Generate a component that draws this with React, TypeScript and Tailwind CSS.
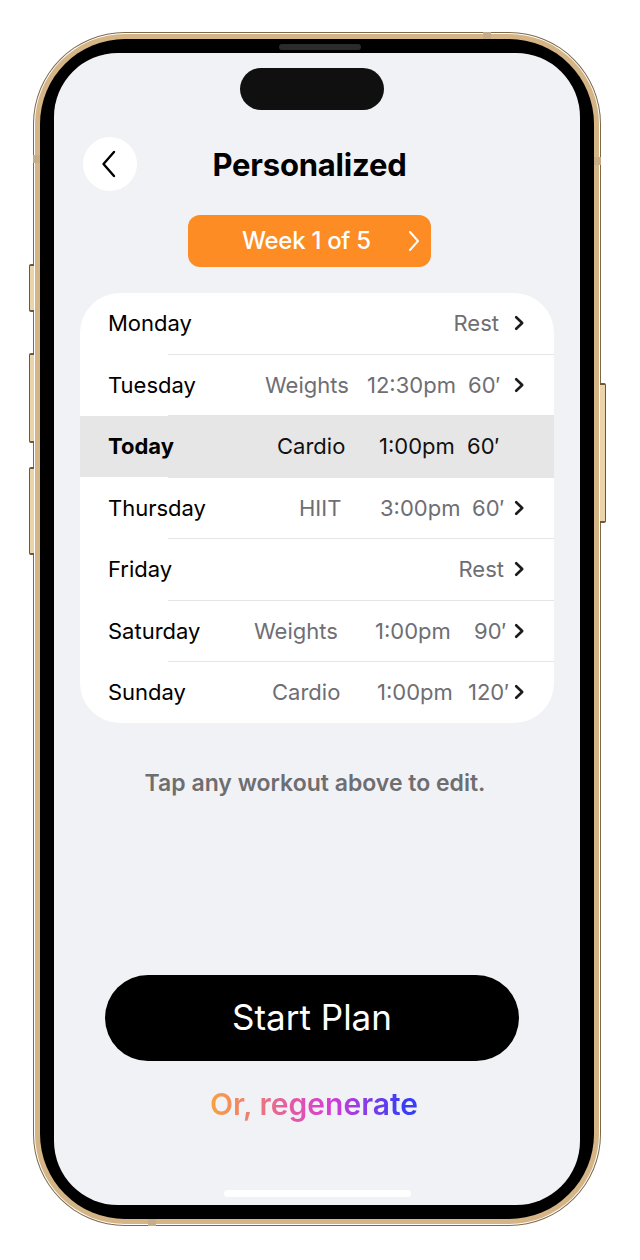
import React from 'react';

type Cell = { text: string; w: string; ml: string; align?: 'left' | 'right' };

interface Row {
  day: string;
  today?: boolean;
  cells: Cell[];
  chevronMl: string;
  chevron: boolean;
}

// widths / gaps read off the reference, so the columns sit where they do there
const ROWS: Row[] = [
  { day: 'Monday', cells: [{ text: 'Rest', w: 'w-[46px]', ml: 'ml-0', align: 'right' }], chevronMl: 'ml-[14px]', chevron: true },
  {
    day: 'Tuesday',
    cells: [
      { text: 'Weights', w: 'w-[85px]', ml: 'ml-0' },
      { text: '12:30pm', w: 'w-[93px]', ml: 'ml-[17px]' },
      { text: '60′', w: 'w-[34px]', ml: 'ml-[8px]' },
    ],
    chevronMl: 'ml-[11px]',
    chevron: true,
  },
  {
    day: 'Today',
    today: true,
    cells: [
      { text: 'Cardio', w: 'w-[70px]', ml: 'ml-0' },
      { text: '1:00pm', w: 'w-[79px]', ml: 'ml-[32px]' },
      { text: '60′', w: 'w-[36px]', ml: 'ml-[9px]' },
    ],
    chevronMl: 'ml-[10px]',
    chevron: false,
  },
  {
    day: 'Thursday',
    cells: [
      { text: 'HIIT', w: 'w-[41px]', ml: 'ml-0' },
      { text: '3:00pm', w: 'w-[83px]', ml: 'ml-[40px]' },
      { text: '60′', w: 'w-[36px]', ml: 'ml-[9px]' },
    ],
    chevronMl: 'ml-[5px]',
    chevron: true,
  },
  { day: 'Friday', cells: [{ text: 'Rest', w: 'w-[46px]', ml: 'ml-0', align: 'right' }], chevronMl: 'ml-[9px]', chevron: true },
  {
    day: 'Saturday',
    cells: [
      { text: 'Weights', w: 'w-[84px]', ml: 'ml-0' },
      { text: '1:00pm', w: 'w-[78px]', ml: 'ml-[37px]' },
      { text: '90′', w: 'w-[36px]', ml: 'ml-[21px]' },
    ],
    chevronMl: 'ml-[3px]',
    chevron: true,
  },
  {
    day: 'Sunday',
    cells: [
      { text: 'Cardio', w: 'w-[68px]', ml: 'ml-0' },
      { text: '1:00pm', w: 'w-[79px]', ml: 'ml-[37px]' },
      { text: '120′', w: 'w-[44px]', ml: 'ml-[12px]' },
    ],
    chevronMl: 'ml-[1px]',
    chevron: true,
  },
];

const Chevron = () => (
  <svg viewBox="0 0 12 16" className="w-[12px] h-[16px]" fill="none">
    <path d="M3.2 2.2 L9.2 8 L3.2 13.8" stroke="#1c1c1e" strokeWidth="2.6" strokeLinecap="round" strokeLinejoin="round" />
  </svg>
);

const ScheduleRow = ({ row }: { row: Row }) => (
  <div className={`flex items-center h-[60.5px] pl-[28px] pr-[29px] ${row.today ? 'bg-[#e6e6e7]' : ''}`}>
    <span className={`flex-1 text-[22px] leading-none text-black ${row.today ? 'font-bold' : 'font-normal'}`}>{row.day}</span>
    <div className="flex items-center">
      {row.cells.map((c, i) => (
        <span
          key={i}
          className={`${c.w} ${c.ml} ${c.align === 'right' ? 'text-right' : 'text-left'} whitespace-nowrap text-[22px] leading-none ${
            row.today ? 'text-[#111]' : 'text-[#6e6e73]'
          }`}
        >
          {c.text}
        </span>
      ))}
      <span className={`${row.chevronMl} w-[12px] flex items-center`}>{row.chevron && <Chevron />}</span>
    </div>
  </div>
);

export default function App() {
  return (
    <div className="w-[640px] h-[1260px] bg-white pt-[32px] pl-[33px] font-['Inter',sans-serif]">
      {/* phone frame */}
      <div className="relative w-[568px] h-[1194px]">
        {/* side buttons */}
        <div className="absolute left-[-4px] top-[232px] w-[5px] h-[48px] bg-[#ebd3aa] border-y-2 border-l border-[#6f5839] rounded-l-[2px]" />
        <div className="absolute left-[-4px] top-[321px] w-[5px] h-[90px] bg-[#ebd3aa] border-y-2 border-l border-[#6f5839] rounded-l-[2px]" />
        <div className="absolute left-[-4px] top-[435px] w-[5px] h-[88px] bg-[#ebd3aa] border-y-2 border-l border-[#6f5839] rounded-l-[2px]" />
        <div className="absolute left-[567px] top-[351px] w-[6px] h-[140px] bg-[#ebd3aa] border-y-2 border-r border-[#6f5839] rounded-r-[2px]" />

        <div className="w-full h-full rounded-[92px] bg-[#7d6849] p-px">
          <div className="w-full h-full rounded-[91px] bg-white p-px">
            <div className="w-full h-full rounded-[90px] bg-[#d5b585] p-[5px]">
              <div className="relative w-full h-full rounded-[85px] bg-black p-[14px]">
                {/* speaker grille */}
                <div className="absolute left-[239px] top-[5px] w-[82px] h-[6px] rounded-full bg-[#2b2b2b]" />

                {/* screen */}
                <div className="w-full h-full rounded-[64px] bg-[#f1f2f6] flex flex-col overflow-hidden">
                  {/* dynamic island */}
                  <div className="mt-[15px] ml-[186px] w-[144px] h-[42px] rounded-full bg-[#101010]" />

                  {/* header */}
                  <div className="mt-[27px] pl-[29px] pr-[44px] grid grid-cols-[54px_1fr_54px] items-center">
                    <button className="w-[54px] h-[54px] rounded-full bg-white flex items-center justify-center">
                      <svg viewBox="0 0 16 28" className="w-[16px] h-[28px] -ml-[3px]" fill="none">
                        <path d="M13 2 L2.5 14 L13 26" stroke="#000" strokeWidth="2.4" strokeLinecap="round" strokeLinejoin="round" />
                      </svg>
                    </button>
                    <h1 className="text-center text-[31px] font-bold tracking-[-0.2px] text-black leading-none">Personalized</h1>
                    <div />
                  </div>

                  {/* week selector */}
                  <button className="mt-[24px] ml-[134px] w-[243px] h-[52px] rounded-[12px] bg-[#fd8c25] flex items-center pl-[54px] pr-[10px]">
                    <span className="text-[24px] font-medium text-white leading-none tracking-[-0.3px]">Week 1 of 5</span>
                    <svg viewBox="0 0 14 22" className="ml-auto w-[14px] h-[22px]" fill="none">
                      <path d="M3 2 L11 11 L3 20" stroke="#fff" strokeWidth="2" strokeLinecap="round" strokeLinejoin="round" />
                    </svg>
                  </button>

                  {/* schedule card */}
                  <div className="mt-[26px] ml-[26px] w-[474px] rounded-[40px] bg-white overflow-hidden">
                    {ROWS.map((row, i) => (
                      <React.Fragment key={row.day}>
                        {i > 0 && <div className="ml-[88px] h-px bg-[#e4e4e7]" />}
                        <ScheduleRow row={row} />
                      </React.Fragment>
                    ))}
                  </div>

                  <p className="mt-[46px] text-center pr-[4px] text-[23px] leading-[28px] font-semibold text-[#6e6e70]">
                    Tap any workout above to edit.
                  </p>

                  {/* actions */}
                  <button className="mt-[178px] ml-[51px] w-[414px] h-[86px] rounded-full bg-black flex items-center justify-center">
                    <span className="text-[35px] font-normal text-white leading-none">Start Plan</span>
                  </button>

                  <div className="mt-[25px] flex justify-center pr-[6px]">
                    <span className="text-[30px] leading-[36px] font-semibold bg-[linear-gradient(90deg,#f9a13f_0%,#e86a8e_30%,#d63cd6_58%,#3a3df7_92%)] bg-clip-text text-transparent">
                      Or, regenerate
                    </span>
                  </div>

                  {/* home indicator */}
                  <div className="mt-[68px] ml-[170px] w-[187px] h-[7px] rounded-full bg-white" />
                </div>
              </div>
            </div>
          </div>
        </div>

        {/* antenna bands */}
        <div className="absolute left-[450px] top-0 w-[8px] h-[7px] bg-[#c4ad88]" />
        <div className="absolute left-0 top-[123px] w-[7px] h-[8px] bg-[#c4ad88]" />
        <div className="absolute left-[561px] top-[125px] w-[7px] h-[8px] bg-[#c4ad88]" />
        <div className="absolute left-[115px] top-[1187px] w-[8px] h-[7px] bg-[#c4ad88]" />
      </div>
    </div>
  );
}
